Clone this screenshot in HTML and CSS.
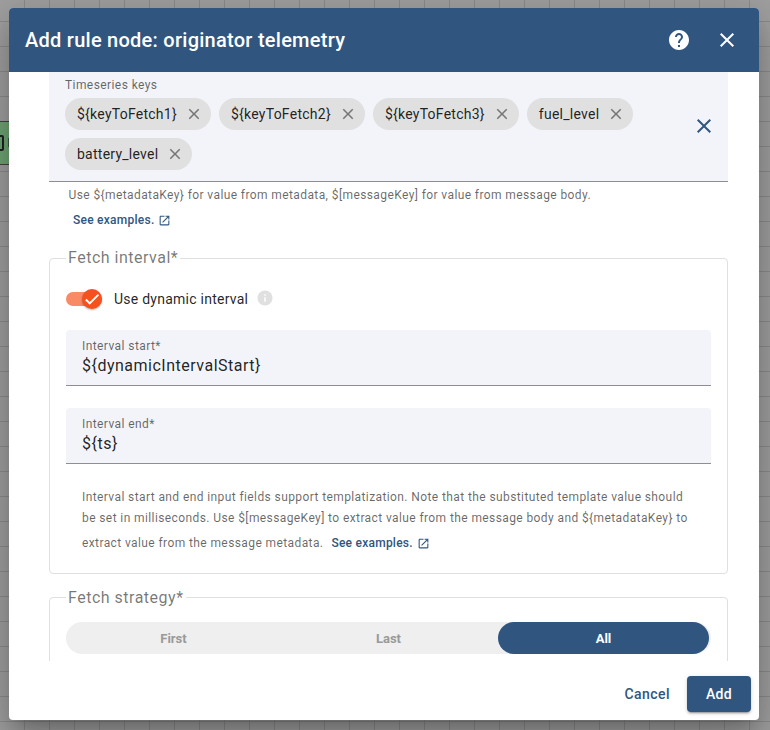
FILE: index.html
```html
<!DOCTYPE html>
<html lang="en">
<head>
<meta charset="utf-8">
<title>Add rule node</title>
<link rel="stylesheet" href="styles.css">
</head>
<body>
<svg width="0" height="0" class="defs" aria-hidden="true">
  <symbol id="close" viewBox="0 0 24 24"><path d="M19 6.41L17.59 5 12 10.59 6.41 5 5 6.41 10.59 12 5 17.59 6.41 19 12 13.41 17.59 19 19 17.59 13.41 12z"/></symbol>
  <symbol id="help" viewBox="0 0 24 24"><path d="M12 2C6.48 2 2 6.48 2 12s4.480 10 10 10 10-4.480 10-10S17.520 2 12 2zm1 17h-2v-2h2v2zm2.070-7.750l-.9.920C13.450 12.900 13 13.500 13 15h-2v-.5c0-1.100.450-2.100 1.170-2.830l1.240-1.260c.370-.360.590-.860.590-1.410 0-1.100-.9-2-2-2s-2 .9-2 2H8c0-2.210 1.790-4 4-4s4 1.790 4 4c0 .880-.360 1.680-.930 2.250z"/></symbol>
  <symbol id="info" viewBox="0 0 24 24"><path d="M12 2C6.480 2 2 6.480 2 12s4.480 10 10 10 10-4.480 10-10S17.520 2 12 2zm1 15h-2v-6h2v6zm0-8h-2V7h2v2z"/></symbol>
  <symbol id="open" viewBox="0 0 24 24"><path d="M19 19H5V5h7V3H5c-1.110 0-2 .9-2 2v14c0 1.100.890 2 2 2h14c1.100 0 2-.9 2-2v-7h-2v7zM14 3v2h3.590l-9.830 9.830 1.410 1.410L19 6.410V10h2V3h-7z"/></symbol>
</svg>
<div class="node"><span class="node-icon"></span><span class="node-text"></span></div>
<main class="dialog">
  <header class="header">
    <h1 class="title">Add rule node: originator telemetry</h1>
    <svg class="icon24 help"><use href="#help"/></svg>
    <svg class="icon24"><use href="#close"/></svg>
  </header>
  <section class="content">
    <div class="keys">
      <div class="keys-main">
        <div class="label">Timeseries keys</div>
        <div class="chips">
          <span class="chip">${keyToFetch1}<svg><use href="#close"/></svg></span>
          <span class="chip">${keyToFetch2}<svg><use href="#close"/></svg></span>
          <span class="chip">${keyToFetch3}<svg><use href="#close"/></svg></span>
          <span class="chip">fuel_level<svg><use href="#close"/></svg></span>
          <span class="chip">battery_level<svg><use href="#close"/></svg></span>
        </div>
      </div>
      <svg class="icon24 clear"><use href="#close"/></svg>
    </div>
    <div class="hint keys-hint">Use ${metadataKey} for value from metadata, $[messageKey] for value from message body.</div>
    <a class="link keys-link">See examples.<svg><use href="#open"/></svg></a>
    <div class="group interval">
      <div class="legend">Fetch interval*</div>
      <div class="toggle-row">
        <span class="switch"><span class="thumb"><svg viewBox="0 0 24 24"><path d="M19.690 5.230L8.960 15.960l-4.230-4.230L2.960 13.500l6 6L21.460 7z"/></svg></span></span>
        <span class="toggle-label">Use dynamic interval</span>
        <svg class="info"><use href="#info"/></svg>
      </div>
      <div class="field"><div class="label">Interval start*</div><div class="value">${dynamicIntervalStart}</div></div>
      <div class="field"><div class="label">Interval end*</div><div class="value">${ts}</div></div>
      <div class="hint note">
        <div>Interval start and end input fields support templatization. Note that the substituted template value should</div>
        <div>be set in milliseconds. Use $[messageKey] to extract value from the message body and ${metadataKey} to</div>
        <div class="last">extract value from the message metadata. <a class="link">See examples.<svg><use href="#open"/></svg></a></div>
      </div>
    </div>
    <div class="group strategy">
      <div class="legend">Fetch strategy*</div>
      <div class="segments"><span>First</span><span>Last</span><span class="active">All</span></div>
    </div>
  </section>
  <footer class="footer">
    <button class="btn">Cancel</button>
    <button class="btn primary">Add</button>
  </footer>
</main>
</body>
</html>
```
FILE: styles.css
```css
* { box-sizing: border-box; }
body {
  margin: 0;
  width: 770px;
  height: 730px;
  padding: 8px 11px 10px 9px;
  overflow: hidden;
  position: relative;
  font-family: Roboto, sans-serif;
  color: rgba(0, 0, 0, .87);
  background-color: #a0a0a0;
  background-image: linear-gradient(to right, #8c8c8c 1px, transparent 1px), linear-gradient(#8c8c8c 1px, transparent 1px);
  background-size: 25px 25px;
  background-position: 24px 21px;
}
.defs { position: absolute; }
svg { fill: currentColor; flex: none; }
.node {
  position: absolute;
  left: -20px;
  top: 121px;
  width: 60px;
  height: 44px;
  background: #6fa575;
  border: 1px solid #444;
}
.node-icon {
  position: absolute;
  left: 5px;
  top: 13px;
  width: 18px;
  height: 16px;
  border: 2px solid #222;
  border-radius: 2px;
}
.node-text { position: absolute; left: 27px; top: 16px; width: 1px; height: 9px; background: #3f5d42; }
.dialog {
  position: relative;
  height: 712px;
  display: flex;
  flex-direction: column;
  background: #fff;
  border-radius: 4px;
  overflow: hidden;
  box-shadow: 0 11px 15px -7px rgba(0, 0, 0, .2), 0 24px 38px 3px rgba(0, 0, 0, .14), 0 9px 46px 8px rgba(0, 0, 0, .12);
}
.header {
  height: 64px;
  flex: none;
  display: flex;
  align-items: center;
  padding: 0 20px 0 16px;
  background: #305680;
  color: #fff;
}
.title { flex: 1; margin: 0; font-size: 20px; font-weight: 500; line-height: 32px; letter-spacing: .26px; }
.icon24 { width: 24px; height: 24px; }
.help { margin-right: 24px; }
.content { height: 589px; flex: none; overflow: hidden; padding: 0 31px 0 40px; }
.keys { height: 110px; display: flex; background: #f3f4f9; border-bottom: 1px solid #8e8e93; padding: 5px 12px 0 16px; }
.keys-main { flex: 1; }
.label { font-size: 12px; line-height: 16px; letter-spacing: .42px; color: rgba(0, 0, 0, .6); }
.chips { display: flex; flex-wrap: wrap; gap: 8px; margin-top: 5px; width: 600px; }
.chip { height: 32px; border-radius: 16px; background: #e0e0e0; padding: 0 8px 0 12px; display: flex; align-items: center; font-size: 14px; letter-spacing: .25px; }
.chip svg { width: 18px; height: 18px; margin-left: 8px; color: #757575; }
.clear { color: #305680; margin-top: 37px; }
.hint { font-size: 12px; line-height: 21px; letter-spacing: .4px; color: rgba(0, 0, 0, .6); white-space: nowrap; }
.keys-hint { padding-left: 19.500px; margin-top: 3px; }
.link { display: inline-flex; align-items: center; color: #305680; font-size: 12px; font-weight: 500; line-height: 20px; letter-spacing: .25px; }
.link svg { width: 13px; height: 13px; margin-left: 4px; position: relative; top: .5px; }
.keys-link { display: flex; margin: 4px 0 0 24px; }
.group { border: 1px solid #e0e0e0; border-radius: 4px; padding: 0 16px; }
.interval { margin-top: 28px; height: 316px; }
.strategy { margin-top: 23px; height: 90px; }
.legend { width: max-content; height: 20px; margin-top: -11px; padding: 0 2px; background: #fff; font-size: 16px; line-height: 20px; letter-spacing: .5px; color: rgba(0, 0, 0, .54); }
.strategy .legend { margin-top: -10px; }
.toggle-row { display: flex; align-items: center; height: 20px; margin: 21px 0 21px; }
.switch { width: 36px; height: 14px; border-radius: 7px; background: #f98a66; display: flex; justify-content: flex-end; align-items: center; }
.thumb { width: 20px; height: 20px; border-radius: 50%; background: #f4511e; display: flex; align-items: center; justify-content: center; box-shadow: 0 1px 2px rgba(0, 0, 0, .3); }
.thumb svg { width: 18px; height: 18px; color: #fff; }
.toggle-label { margin-left: 12px; font-size: 14px; letter-spacing: .25px; }
.info { width: 18px; height: 18px; margin: -2px 0 0 8px; color: #e0e0e0; }
.field { height: 56px; padding: 8px 16px 0; background: #f3f4f9; border-bottom: 1px solid #8e8e93; border-radius: 4px 4px 0 0; }
.field + .field { margin-top: 22px; }
.value { font-size: 16px; line-height: 24px; letter-spacing: .5px; }
.note { padding-left: 16px; margin-top: 23px; }
.last { display: flex; align-items: center; margin-top: 4px; }
.last .link { margin-left: 8px; line-height: 21px; }
.last .link svg { top: 0; }
.segments { display: flex; height: 32px; margin-top: 14px; border-radius: 16px; background: #efefef; padding-right: 2px; font-size: 13px; font-weight: 700; line-height: 33px; text-align: center; color: #999; }
.segments span { width: 215px; }
.segments .active { width: 211px; margin-left: 2px; border-radius: 16px; background: #305680; color: #fff; }
.footer { flex: 1; display: flex; justify-content: flex-end; align-items: flex-start; padding: 15px 8px 0; }
.btn { height: 36px; border: 0; border-radius: 4px; padding: 0 17px; background: none; font: 500 14px Roboto, sans-serif; letter-spacing: .45px; color: #305680; }
.primary { width: 64px; background: #305680; color: #fff; letter-spacing: .3px; box-shadow: 0 3px 1px -2px rgba(0, 0, 0, .2), 0 2px 2px rgba(0, 0, 0, .14), 0 1px 5px rgba(0, 0, 0, .12); }
```
